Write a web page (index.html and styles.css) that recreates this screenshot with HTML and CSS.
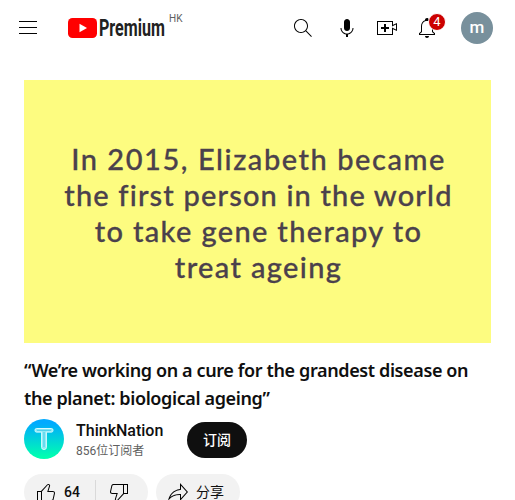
FILE: index.html
```html
<!DOCTYPE html>
<html lang="zh-CN">
<head>
    <meta charset="UTF-8">
    <meta name="viewport" content="width=device-width, initial-scale=1.0">
    <title>YouTube</title>
    <link rel="stylesheet" href="styles.css">
</head>
<body>
    <header class="header">
        <svg class="icon" viewBox="0 0 24 24"><path d="M21 6H3V5h18v1zM21 11H3v1h18v-1zM21 17H3v1h18v-1z"/></svg>
        <a class="logo" href="#">
            <svg class="logo-mark" viewBox="0 0 29 20">
                <rect width="29" height="20" rx="4.5" fill="#f00"/>
                <path d="M11.5 5.8v8.4l7.5-4.2z" fill="#fff"/>
            </svg>
            <span class="logo-text"><span class="logo-word">Premium</span></span>
            <span class="country">HK</span>
        </a>
        <nav class="header-buttons">
            <svg class="icon" viewBox="0 0 24 24"><path d="m20.87 20.17-5.59-5.59C16.35 13.35 17 11.75 17 10c0-3.87-3.13-7-7-7s-7 3.13-7 7 3.13 7 7 7c1.75 0 3.35-.65 4.58-1.71l5.59 5.59.7-.71zM10 16c-3.31 0-6-2.69-6-6s2.69-6 6-6 6 2.69 6 6-2.69 6-6 6z"/></svg>
            <svg class="icon mic" viewBox="0 0 24 24"><path d="M12 3c-1.66 0-3 1.37-3 3.07v5.86c0 1.7 1.34 3.07 3 3.07s3-1.37 3-3.07V6.07C15 4.37 13.66 3 12 3z"/><path d="M18.5 12h-1c0 3.03-2.47 5.5-5.5 5.5S6.5 15.03 6.5 12h-1c0 3.24 2.39 5.93 5.5 6.41V21h2v-2.59c3.11-.48 5.5-3.17 5.5-6.41z"/></svg>
            <svg class="icon" viewBox="0 0 24 24"><path d="M14 13h-3v3H9v-3H6v-2h3V8h2v3h3v2zM17 6H3v12h14v-6.39l4 1.83V8.56l-4 1.83V6m1-1v3.83L22 7v8l-4-1.83V19H2V5h16z"/></svg>
            <div class="bell">
                <svg class="icon" viewBox="0 0 24 24"><path d="M10 20h4c0 1.1-.9 2-2 2s-2-.9-2-2zM20 17.35V19H4v-1.65l2-1.88v-5.15c0-2.92 1.56-5.22 4-5.98v-.38c0-1.42 1.49-2.5 2.99-1.76.65.32 1.01 1.03 1.01 1.76v.39c2.44.75 4 3.06 4 5.98v5.15l2 1.87zm-1 .42-2-1.88v-5.47c0-2.47-1.19-4.36-3.13-5.1-1.26-.53-2.64-.5-3.84.03C8.15 6.11 7 7.99 7 10.42v5.47l-2 1.88V18h14v-.23z"/></svg>
                <span class="badge">4</span>
            </div>
            <div class="account">m</div>
        </nav>
    </header>

    <main class="content">
        <div class="video">
            <span class="caption caption-1">In 2015, Elizabeth became</span>
            <span class="caption caption-2">the first person in the world</span>
            <span class="caption caption-3">to take gene therapy to</span>
            <span class="caption caption-4">treat ageing</span>
        </div>

        <h1 class="title">“We’re working on a cure for the grandest disease on<br>the planet: biological ageing”</h1>

        <div class="owner">
            <svg class="channel-avatar" viewBox="0 0 40 40">
                <defs>
                    <linearGradient id="sky" x1="0" y1="0" x2="0" y2="1">
                        <stop offset="0.1" stop-color="#0af"/>
                        <stop offset="0.95" stop-color="#00ffb0"/>
                    </linearGradient>
                </defs>
                <circle cx="20" cy="20" r="20" fill="url(#sky)"/>
                <path d="M12.3 9.5h15.4q1.3 0 1.3 1.8t-1.3 1.8h-5.3v15.4q0 2-2.4 2t-2.4-2V13.1h-5.3q-1.3 0-1.3-1.8t1.3-1.8z" fill="#8eeaf5" stroke="#d8fbff" stroke-width="1"/>
                <path d="M13 11.3h14M20 13v15" stroke="#45cbe9" stroke-width="1" fill="none"/>
            </svg>
            <div class="channel">
                <div class="channel-name">ThinkNation</div>
                <div class="subscribers">856位订阅者</div>
            </div>
            <button class="subscribe">订阅</button>
        </div>

        <div class="actions">
            <div class="pill votes">
                <svg class="icon" viewBox="0 0 24 24"><path d="M18.77 11h-4.23l1.52-4.94C16.38 5.03 15.54 4 14.38 4c-.58 0-1.14.24-1.52.65L7 11H3v10h14.43c1.06 0 1.98-.67 2.19-1.61l1.34-6c.27-1.24-.78-2.39-2.19-2.39zM7 20H4v-8h3v8zm12.98-6.83-1.34 6c-.1.48-.61.83-1.21.83H8v-8.61l5.6-6.06c.19-.21.48-.33.78-.33.26 0 .5.11.63.3.07.1.15.26.09.47l-1.52 4.94-.4 1.29h5.58c.41 0 .8.17 1.03.46.13.15.26.4.19.71z"/></svg>
                <span class="likes">64</span>
                <span class="divider"></span>
                <svg class="icon" viewBox="0 0 24 24"><path d="M17 4H6.57C5.5 4 4.59 4.67 4.38 5.61l-1.34 6C2.77 12.85 3.82 14 5.23 14h4.23l-1.52 4.94C7.62 19.97 8.46 21 9.62 21c.58 0 1.14-.24 1.52-.65L17 14h4V4h-4zm-6.6 15.67c-.19.21-.48.33-.78.33-.26 0-.5-.11-.63-.3-.07-.1-.15-.26-.09-.47l1.52-4.94.4-1.29H5.23c-.41 0-.8-.17-1.03-.46-.12-.15-.25-.4-.18-.72l1.34-6C5.46 5.35 5.97 5 6.57 5H16v8.61l-5.6 6.06zM20 13h-3V5h3v8z"/></svg>
            </div>
            <div class="pill share">
                <svg class="icon" viewBox="0 0 24 24"><path d="M15 5.63 20.66 12 15 18.37V14h-1c-3.96 0-7.14 1-9.75 3.09 1.84-4.07 5.11-6.4 9.89-7.1l.86-.13V5.63M14 3v6C6.22 10.13 3.11 15.33 2 21c2.78-3.97 6.44-6 12-6v6l8-9-8-9z"/></svg>
                <span class="share-label">分享</span>
            </div>
        </div>
    </main>
</body>
</html>
```
FILE: styles.css
```css
* {
    box-sizing: border-box;
}

body {
    margin: 0;
    height: 500px;
    overflow: hidden;
    background: #fff;
    color: #0f0f0f;
    font-family: Roboto, "Noto Sans CJK SC", sans-serif;
}

.icon {
    display: block;
    width: 24px;
    height: 24px;
    flex: none;
    fill: #030303;
}

/* Header */
.header {
    display: flex;
    align-items: center;
    height: 56px;
    padding: 0 22px 0 16px;
}

.logo {
    display: flex;
    align-items: center;
    margin-left: 28px;
    color: #606060;
    text-decoration: none;
}

.logo-mark {
    width: 29px;
    height: 20px;
}

.logo-text {
    width: 68px;
    margin-left: 2px;
    color: #212121;
    font-size: 24px;
    font-weight: 700;
    line-height: 24px;
}

.logo-word {
    display: inline-block;
    transform: scaleX(0.67);
    transform-origin: 0 50%;
}

.country {
    align-self: flex-start;
    margin: -3px 0 0 2px;
    font-size: 10px;
    line-height: 12px;
}

.header-buttons {
    display: flex;
    align-items: center;
    margin-left: auto;
    gap: 16px;
}

.mic {
    margin-left: 4px;
}

.bell {
    position: relative;
}

.badge {
    position: absolute;
    top: -3px;
    left: 13px;
    width: 18px;
    height: 18px;
    border: 1px solid #fff;
    border-radius: 50%;
    background: #c00;
    color: #fff;
    font-size: 13px;
    line-height: 16px;
    text-align: center;
}

.account {
    width: 32px;
    height: 32px;
    margin-left: 6px;
    border-radius: 50%;
    background: #78909c;
    color: #fff;
    font-size: 17px;
    font-weight: 500;
    line-height: 30px;
    text-align: center;
}

/* Video */
.content {
    padding: 24px 24px 0;
}

.video {
    display: flex;
    flex-direction: column;
    align-items: center;
    height: 263px;
    padding: 61px 0 0 2px;
    background: #fdfc80;
    color: #4b414c;
    font-family: Lato, sans-serif;
    font-size: 29px;
    font-weight: 500;
    line-height: 36px;
}

.caption {
    white-space: nowrap;
    -webkit-text-stroke: 0.3px #4b414c;
}

.caption-1 {
    letter-spacing: 1.55px;
}

.caption-2 {
    letter-spacing: 1.15px;
}

.caption-3,
.caption-4 {
    letter-spacing: 1.35px;
}

.title {
    margin: 13px 0 0;
    font-family: "Noto Sans", sans-serif;
    font-size: 18px;
    font-weight: 600;
    letter-spacing: -0.38px;
    line-height: 28px;
    white-space: nowrap;
}

/* Channel row */
.owner {
    display: flex;
    align-items: center;
    height: 40px;
    margin-top: 7px;
}

.channel-avatar {
    width: 40px;
    height: 40px;
}

.channel {
    width: 99px;
    margin-left: 12px;
    padding-top: 2px;
}

.channel-name {
    font-size: 16px;
    font-weight: 500;
    line-height: 22px;
}

.subscribers {
    color: #606060;
    font-size: 12px;
    line-height: 18px;
}

.subscribe {
    width: 60px;
    height: 36px;
    margin: 2px 0 0 12px;
    padding: 0 0 2px;
    border: 0;
    border-radius: 18px;
    background: #0f0f0f;
    color: #fff;
    font-family: inherit;
    font-size: 14px;
    font-weight: 500;
}

/* Buttons under the channel */
.actions {
    display: flex;
    gap: 8px;
    margin-top: 15px;
}

.pill {
    display: flex;
    align-items: center;
    height: 36px;
    border-radius: 18px;
    background: #f2f2f2;
    font-size: 14px;
}

.votes {
    width: 124px;
    padding-left: 10px;
}

.likes {
    width: 31px;
    margin-left: 6px;
    padding-bottom: 1px;
    font-weight: 500;
}

.divider {
    width: 1px;
    height: 24px;
    margin-right: 11px;
    background: #d9d9d9;
}

.share {
    width: 84px;
    padding-left: 10px;
    gap: 6px;
}

.share-label {
    padding-bottom: 3px;
}
```
